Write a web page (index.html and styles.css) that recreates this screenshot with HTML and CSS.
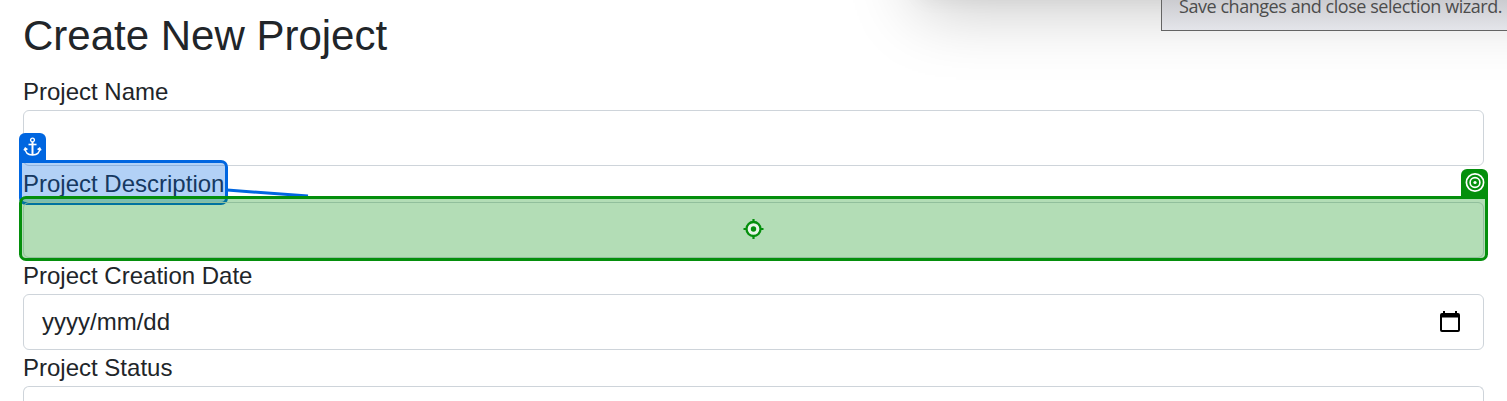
FILE: index.html
```html
<!DOCTYPE html>
<html lang="en">
<head>
<meta charset="utf-8">
<title>Create New Project</title>
<link rel="stylesheet" href="styles.css">
</head>
<body>
<main class="page">
  <h2 class="title">Create New Project</h2>
  <form class="form">
    <label class="label">Project Name</label>
    <div class="control"></div>
    <label class="label anchor-field">Project Description
      <span class="anchor-box"></span>
      <span class="badge anchor-badge">
        <svg width="19" height="20" viewBox="0 0 19 20" fill="none" stroke="#fff" stroke-width="1.6">
          <circle cx="9.5" cy="3" r="1.9" stroke-width="1.4"/>
          <path d="M9.5 5v13" stroke-width="2"/><path d="M5.5 7.5h8"/>
          <path d="M2.2 11.2c0 4 3 6.6 7.3 6.9 4.300-.3 7.300-2.900 7.300-6.900M1 13.300l1.300-2.300 2.200 1.500M18 13.300l-1.300-2.300-2.200 1.500" stroke-width="1.500"/>
        </svg>
      </span>
      <svg class="connector" width="100" height="20" viewBox="0 0 100 20"><path d="M0 5L81 11" stroke="#0066e0" stroke-width="3"/></svg>
    </label>
    <div class="control target-field">
      <span class="target-box">
        <svg width="22" height="22" viewBox="0 0 22 22">
          <circle cx="10.500" cy="11" r="7" fill="#e8f5e8" stroke="#048f0c" stroke-width="2.300"/>
          <circle cx="10.500" cy="11" r="2.700" fill="#048f0c"/>
          <path d="M10.500 1v3M10.500 18v3M.5 11h3M17.500 11h3" stroke="#048f0c" stroke-width="2.200"/>
        </svg>
      </span>
      <span class="badge target-badge">
        <svg width="20" height="20" viewBox="0 0 20 20" fill="none" stroke="#fff">
          <circle cx="10" cy="9.500" r="8.600" stroke-width="1.700"/>
          <circle cx="10" cy="9.500" r="4.900" stroke-width="1.600"/>
          <circle cx="10" cy="9.500" r="1.600" fill="#fff" stroke="none"/>
        </svg>
      </span>
    </div>
    <label class="label">Project Creation Date</label>
    <div class="control date"><span>yyyy/mm/dd</span>
      <svg width="20" height="22" viewBox="0 0 20 22"><path fill="#000" fill-rule="evenodd" d="M3 0h2v2h10V0h2v2h1a2 2 0 0 1 2 2v15a2 2 0 0 1-2 2H2a2 2 0 0 1-2-2V4a2 2 0 0 1 2-2h1zM2 6.500V19h16V6.500z"/></svg>
    </div>
    <label class="label">Project Status</label>
    <div class="control control-last"></div>
  </form>
</main>
<div class="wizard"></div>
<div class="tooltip">Save changes and close selection wizard.</div>
</body>
</html>
```
FILE: styles.css
```css
* { box-sizing: border-box; }
body {
  margin: 0;
  height: 401px;
  overflow: hidden;
  position: relative;
  background: #fff;
  color: #212529;
  font: 24px/36px "Liberation Sans", Arial, sans-serif;
}
.page { padding: 11px 23px 0; }
.title { margin: 0 0 13px; font-size: 42px; line-height: 50px; font-weight: 400; }
.form { display: flex; flex-direction: column; align-items: stretch; }
.label { height: 36px; align-self: flex-start; white-space: nowrap; }
.control { height: 56px; border: 1px solid #ced4da; border-radius: 6px; }
.control-last { height: 15px; border-bottom: 0; border-radius: 6px 6px 0 0; }
.date { display: flex; align-items: center; justify-content: space-between; padding: 0 23px 0 18px; }
.anchor-field, .target-field { position: relative; }
.anchor-box {
  position: absolute;
  left: -4px; top: -6px;
  width: 209px; height: 45px;
  border: 3px solid #0066e0;
  border-radius: 0 7px 7px 7px;
  background: rgba(0, 102, 224, .3);
}
.badge {
  position: absolute;
  width: 27px; height: 30px;
  display: flex;
  justify-content: center;
  padding-top: 4px;
  border-radius: 6px 6px 0 0;
}
.anchor-badge { left: -4px; top: -33px; background: #0066e0; }
.connector { position: absolute; left: 204px; top: 19px; }
.target-box {
  position: absolute;
  left: -5px; top: -7px;
  width: 1469px; height: 65px;
  display: flex;
  align-items: center;
  justify-content: center;
  border: 3px solid #048f0c;
  border-radius: 7px 0 7px 7px;
  background: rgba(4, 143, 12, .3);
}
.target-badge { right: -5px; top: -34px; background: #048f0c; }
.wizard {
  position: absolute;
  left: 918px; top: -500px;
  width: 900px; height: 498px;
  background: #fff;
  box-shadow: 0 12px 64px rgba(0, 0, 0, .22), 0 3px 18px rgba(0, 0, 0, .04);
}
.tooltip {
  position: absolute;
  left: 1161px; top: -20px;
  width: 346px; height: 51px;
  padding: 13px 0 0 17px;
  border: 1px solid #646464;
  border-right: 0;
  background: linear-gradient(#c8c8cc 30%, #e4e5ea);
  color: #4c4c4c;
  font: 18px/24px "Open Sans", "Noto Sans", sans-serif;
  letter-spacing: -.45px;
  white-space: nowrap;
}
```
